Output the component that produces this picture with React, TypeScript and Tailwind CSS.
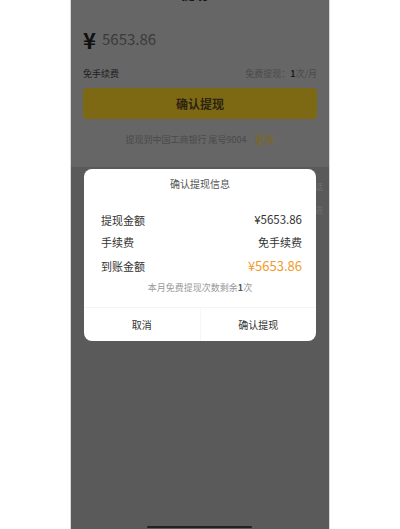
import React from "react";

const font = { fontFamily: '"Noto Sans CJK SC", "Noto Sans", sans-serif' };

export default function App() {
  return (
    <div className="w-[400px] h-[529px] bg-white flex justify-center" style={font}>
      <div className="w-[260px] h-[529px] relative border-x border-[#d8d8d8] flex flex-col overflow-hidden">
        {/* dimmed top white area */}
        <div className="h-[167px] bg-[#666666] flex flex-col px-3">
          <div className="h-[20px] -mt-[16px] flex items-end justify-between text-[#151515]">
            <span className="text-[16px] leading-[20px] font-bold">‹</span>
            <span className="text-[13px] leading-[20px] font-bold ml-[24px]">提现</span>
            <span className="text-[10px] leading-[20px]">提现记录</span>
          </div>
          <div className="mt-[23px] h-[24px] flex items-center gap-[6px]">
            <span className="text-[22px] leading-[24px] font-bold text-[#111111]">¥</span>
            <span className="text-[15px] leading-[24px] text-[#3a3a3a]">5653.86</span>
          </div>
          <div className="mt-[16px] h-[14px] flex items-center justify-between text-[9px] leading-[14px]">
            <span className="text-[#1e1e1e]">免手续费</span>
            <span className="text-[#4a4a4a]">
              免费提现：<span className="font-bold text-[#1e1e1e]">1</span>次/月
            </span>
          </div>
          <div className="mt-[7px] h-[31px] rounded-[4px] bg-[#7d6814] flex items-center justify-center">
            <span className="text-[12px] font-bold text-[#2a2410]">确认提现</span>
          </div>
          <div className="mt-[14px] h-[14px] flex items-center justify-center gap-[8px]">
            <span className="text-[9px] leading-[14px] text-[#4a4a4a]">提现到中国工商银行 尾号9004</span>
            <span className="text-[10px] leading-[14px] text-[#7d6814]">更改</span>
          </div>
        </div>
        {/* dimmed gray area */}
        <div className="flex-1 bg-[#5a5a5a] flex flex-col items-end pr-[6px] pt-[14px] text-[8px] leading-[12px] text-[#707070] gap-[11px]">
          <span>请拨打客服电话</span>
          <span>请耐心等待处理进</span>
        </div>

        {/* modal */}
        <div className="absolute left-[13px] top-[169px] w-[232px] h-[172px] bg-white rounded-[8px] flex flex-col">
          <div className="pt-[8px] h-[22px] text-center text-[10px] leading-[14px] text-[#555555]">确认提现信息</div>
          <div className="mt-[18px] pl-[17px] pr-[14px] flex flex-col">
            <div className="h-[22px] flex items-center justify-between text-[11px] text-[#333333]">
              <span>提现金额</span>
              <span className="text-[11.5px]">¥5653.86</span>
            </div>
            <div className="h-[22px] flex items-center justify-between text-[11px] text-[#333333]">
              <span>手续费</span>
              <span>免手续费</span>
            </div>
            <div className="h-[26px] flex items-center justify-between">
              <span className="text-[11px] text-[#333333]">到账金额</span>
              <span className="text-[13px] text-[#f19a2c]">¥5653.86</span>
            </div>
          </div>
          <div className="mt-[3px] h-[12px] text-center text-[9px] leading-[12px] text-[#999999]">
            本月免费提现次数剩余<span className="font-bold text-[#555555]">1</span>次
          </div>
          <div className="mt-[13px] flex-1 border-t border-[#f5f5f5] flex">
            <div className="flex-1 flex items-center justify-center text-[10px] text-[#333333]">取消</div>
            <div className="w-px bg-[#f7f7f7]" />
            <div className="flex-1 flex items-center justify-center text-[10px] text-[#333333]">确认提现</div>
          </div>
        </div>

        {/* home indicator */}
        <div className="absolute left-[76px] bottom-[1px] w-[105px] h-[2px] rounded-full bg-[#222222]" />
      </div>
    </div>
  );
}
